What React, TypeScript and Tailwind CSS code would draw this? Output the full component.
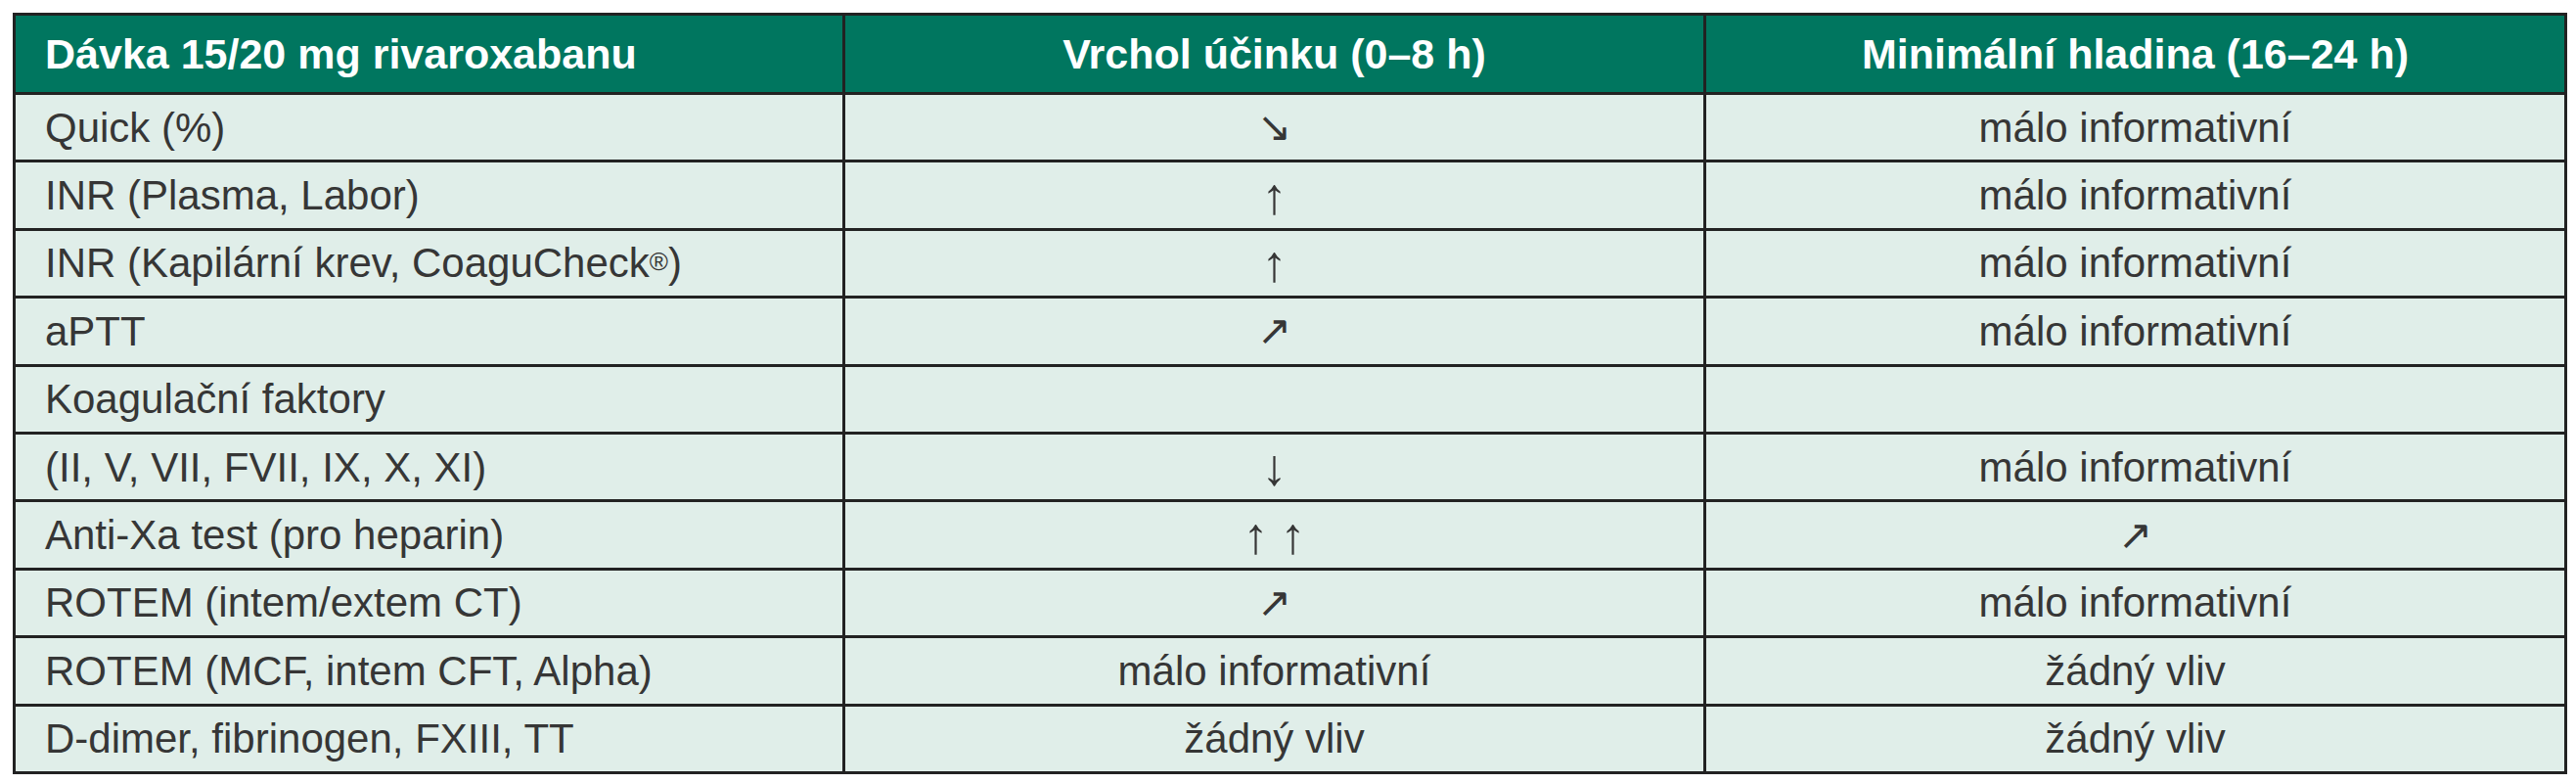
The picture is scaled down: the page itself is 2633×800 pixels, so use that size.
import React from "react";

type Cell = React.ReactNode;

const Up = () => <span className="text-[52px] font-bold leading-none">↑</span>;
const Down = () => <span className="text-[52px] font-bold leading-none">↓</span>;
const NE = () => <span className="text-[42px] leading-none">↗</span>;
const SE = () => <span className="text-[42px] leading-none">↘</span>;

const rows: [Cell, Cell, Cell][] = [
  ["Quick (%)", <SE />, "málo informativní"],
  ["INR (Plasma, Labor)", <Up />, "málo informativní"],
  [
    <>
      INR (Kapilární krev, CoaguCheck<sup className="text-[26px] relative -top-[2px]">®</sup>)
    </>,
    <Up />,
    "málo informativní",
  ],
  ["aPTT", <NE />, "málo informativní"],
  ["Koagulační faktory", "", ""],
  ["(II, V, VII, FVII, IX, X, XI)", <Down />, "málo informativní"],
  [
    "Anti-Xa test (pro heparin)",
    <span className="flex gap-[12px]">
      <Up />
      <Up />
    </span>,
    <NE />,
  ],
  ["ROTEM (intem/extem CT)", <NE />, "málo informativní"],
  ["ROTEM (MCF, intem CFT, Alpha)", "málo informativní", "žádný vliv"],
  ["D-dimer, fibrinogen, FXIII, TT", "žádný vliv", "žádný vliv"],
];

export default function App() {
  return (
    <div
      className="w-[2633px] h-[800px] bg-white pt-[13px] pl-[13px]"
      style={{ fontFamily: '"Liberation Sans", Arial, sans-serif' }}
    >
      <div className="w-[2611px] border-[3px] border-[#222222] bg-[#e0eee9]">
        <div className="flex h-[78px] bg-[#00765f] text-white font-bold text-[43px]">
          <div className="w-[845px] flex items-center pl-[30px]">Dávka 15/20 mg rivaroxabanu</div>
          <div className="w-[880px] flex items-center justify-center border-l-[3px] border-[#222222]">
            Vrchol účinku (0–8 h)
          </div>
          <div className="flex-1 flex items-center justify-center border-l-[3px] border-[#222222]">
            Minimální hladina (16–24 h)
          </div>
        </div>
        {rows.map((r, i) => (
          <div key={i} className="flex h-[69.4px] border-t-[3px] border-[#222222] text-[#363636] text-[42px]">
            <div className="w-[845px] flex items-center pl-[30px]">{r[0]}</div>
            <div className="w-[880px] flex items-center justify-center border-l-[3px] border-[#222222]">{r[1]}</div>
            <div className="flex-1 flex items-center justify-center border-l-[3px] border-[#222222]">{r[2]}</div>
          </div>
        ))}
      </div>
    </div>
  );
}
